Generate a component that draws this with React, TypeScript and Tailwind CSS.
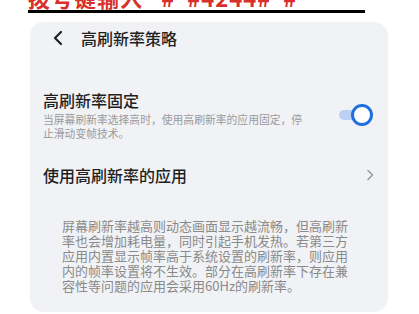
import React from "react";

export default function App() {
  const font = { fontFamily: '"Noto Sans CJK SC", "Noto Sans", sans-serif' };
  return (
    <div className="relative w-[419px] h-[314px] bg-white overflow-hidden" style={font}>
      <div className="absolute left-[28px] top-[-14px] text-[22px] leading-[22px] font-bold text-[#d9302c] whitespace-nowrap tracking-[1px]">
        拨号键输入 *#*#4244#*#*
      </div>
      <div className="absolute left-[28px] top-[10px] w-[337px] h-[3px] bg-black" />
      <div className="absolute left-[30px] top-[22px] w-[358px] h-[290px] rounded-[14px] bg-[#f1f2f6] flex flex-col">
        <div className="flex items-center h-[30px] mt-[1px]">
          <svg className="ml-[22px]" width="12" height="16" viewBox="0 0 12 16">
            <path d="M9 2 L3 8 L9 14" fill="none" stroke="#222" strokeWidth="2.2" strokeLinecap="round" strokeLinejoin="round" />
          </svg>
          <span className="ml-[17px] text-[16px] text-[#1f1f1f] font-medium">高刷新率策略</span>
        </div>
        <div className="flex items-center mt-[37px]">
          <div className="ml-[13px] flex flex-col w-[266px]">
            <span className="text-[16px] leading-[20px] font-medium text-[#1f1f1f]">高刷新率固定</span>
            <span className="mt-[2px] text-[10.8px] leading-[14px] text-[#9a9a9a]">
              当屏幕刷新率选择高时，使用高刷新率的应用固定，停止滑动变帧技术。
            </span>
          </div>
          <div className="relative ml-[30px] w-[34px] h-[22px]">
            <div className="absolute left-0 top-[6px] w-[26px] h-[10px] rounded-full bg-[#bcd0f5]" />
            <div className="absolute left-[12px] top-0 w-[22px] h-[22px] rounded-full bg-white border-[3px] border-[#1f6fe0]" />
          </div>
        </div>
        <div className="flex items-center mt-[25px] h-[20px]">
          <span className="ml-[13px] text-[16px] leading-[20px] font-medium text-[#1f1f1f]">使用高刷新率的应用</span>
          <svg className="ml-auto mr-[14px]" width="8" height="12" viewBox="0 0 8 12">
            <path d="M2 1.5 L6.5 6 L2 10.5" fill="none" stroke="#9a9a9a" strokeWidth="1.5" strokeLinecap="round" strokeLinejoin="round" />
          </svg>
        </div>
        <p className="mt-[33px] ml-[32px] w-[292px] text-[13px] leading-[15px] text-[#8a8a8a]">
          屏幕刷新率越高则动态画面显示越流畅，但高刷新率也会增加耗电量，同时引起手机发热。若第三方应用内置显示帧率高于系统设置的刷新率，则应用内的帧率设置将不生效。部分在高刷新率下存在兼容性等问题的应用会采用60Hz的刷新率。
        </p>
      </div>
    </div>
  );
}
